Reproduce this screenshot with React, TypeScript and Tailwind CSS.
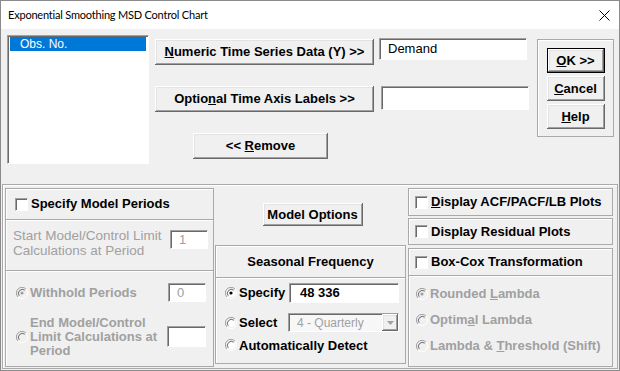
import clsx from "clsx"
import type { ReactNode } from "react"

const raised =
  "bg-[#f0f0f0] shadow-[inset_-1px_-1px_#696969,inset_1px_1px_#ffffff,inset_-2px_-2px_#a0a0a0,inset_2px_2px_#e3e3e3]"
const sunken = "border border-[#a0a0a0] border-r-white border-b-white shadow-[inset_1px_1px_#696969]"
const frame = "border border-[#a9a9a9] shadow-[inset_1px_1px_#ffffff]"

function Btn({ children, className }: { children: ReactNode; className?: string }) {
  return (
    <div className={clsx("flex items-center justify-center text-[13px] font-bold text-black", raised, className)}>
      {children}
    </div>
  )
}

function Check() {
  return <div className={clsx("w-[13px] h-[13px] bg-white shrink-0", sunken)} />
}

function Radio({ checked, disabled }: { checked?: boolean; disabled?: boolean }) {
  return (
    <svg width="12" height="12" viewBox="0 0 12 12" className="shrink-0">
      <path d="M10 2 A5.5 5.5 0 0 0 2 10" fill="none" stroke="#a0a0a0" strokeWidth="1" />
      <path d="M2 10 A5.5 5.5 0 0 0 10 2" fill="none" stroke="#ffffff" strokeWidth="1" />
      <circle cx="6" cy="6" r="4" fill={disabled ? "#f0f0f0" : "#ffffff"} />
      <path d="M8.8 3.2 A4 4 0 0 0 3.2 8.8" fill="none" stroke="#696969" strokeWidth="1" />
      {checked && <circle cx="6" cy="6" r="1.6" fill={disabled ? "#a0a0a0" : "#000000"} />}
    </svg>
  )
}

function Field({ value, className, muted }: { value?: string; className?: string; muted?: boolean }) {
  return (
    <div
      className={clsx(
        "bg-white flex items-center pl-[8px] text-[13px]",
        muted ? "text-[#a0a0a0]" : "text-black",
        sunken,
        className
      )}
    >
      {value}
    </div>
  )
}

export default function App() {
  return (
    <div className="w-[620px] h-[371px] bg-[#f0f0f0] border border-[#8a8a8a] overflow-hidden font-['Liberation_Sans',Arial,sans-serif] text-black">
      {/* Title bar */}
      <div className="h-[28px] bg-white flex items-center justify-between pl-[7px] pr-[9px]">
        <span className="text-[11px] tracking-[-0.2px] font-['Lato',sans-serif] text-black">
          Exponential Smoothing MSD Control Chart
        </span>
        <svg width="11" height="11" viewBox="0 0 11 11">
          <path d="M0.5 0.5 L10.5 10.5 M10.5 0.5 L0.5 10.5" stroke="#000" strokeWidth="1" />
        </svg>
      </div>

      {/* Top section */}
      <div className="flex h-[155px]">
        <div className={clsx("ml-[6px] mt-[6px] w-[142px] h-[129px] bg-white pt-[1px] px-[2px]", sunken)}>
          <div className="h-[14px] bg-[#0078d7] text-white text-[12px] leading-[14px] pl-[10px]">Obs. No.</div>
        </div>

        <div className="ml-[6px] mt-[10px] flex flex-col">
          <div className="flex items-start">
            <Btn className="w-[219px] h-[26px]">
              <span>
                <u>N</u>umeric Time Series Data (Y) &gt;&gt;
              </span>
            </Btn>
            <Field value="Demand" className="ml-[5px] w-[148px] h-[22px] -mt-[1px]" />
          </div>
          <div className="flex items-start mt-[21px]">
            <Btn className="w-[219px] h-[26px]">
              <span>
                Optio<u>n</u>al Time Axis Labels &gt;&gt;
              </span>
            </Btn>
            <Field className="ml-[7px] w-[148px] h-[24px]" />
          </div>
          <Btn className="ml-[38px] mt-[21px] w-[135px] h-[26px]">
            <span>
              &lt;&lt; <u>R</u>emove
            </span>
          </Btn>
        </div>

        <div className={clsx("ml-[8px] mt-[10px] w-[77px] h-[98px] flex flex-col items-center pt-[8px] gap-[3px]", frame)}>
          <div className="w-[58px] h-[25px] border border-black">
            <Btn className="w-full h-full">
              <span>
                <u>O</u>K &gt;&gt;
              </span>
            </Btn>
          </div>
          <Btn className="w-[58px] h-[25px]">
            <span>
              <u>C</u>ancel
            </span>
          </Btn>
          <Btn className="w-[58px] h-[25px]">
            <span>
              <u>H</u>elp
            </span>
          </Btn>
        </div>
      </div>

      {/* Bottom frame */}
      <div className={clsx("ml-[1px] w-[616px] h-[185px] flex pt-[3px] pl-[2px]", frame)}>
        {/* Left panel */}
        <div className={clsx("w-[209px] h-[179px] flex flex-col", frame)}>
          <div className="h-[31px] flex items-center gap-[3px] pl-[9px] border-b border-[#a9a9a9]">
            <Check />
            <span className="text-[13px] font-bold">Specify Model Periods</span>
          </div>
          <div className="h-[51px] flex items-start justify-between pl-[7px] pr-[5px] pt-[8px] border-b border-[#a9a9a9] shadow-[inset_0_1px_#ffffff]">
            <span className="text-[13.5px] leading-[15px] text-[#a0a0a0]">
              Start Model/Control Limit
              <br />
              Calculations at Period
            </span>
            <Field value="1" muted className="w-[38px] h-[19px] mt-[2px]" />
          </div>
          <div className="flex-1 flex flex-col pl-[10px] pr-[7px] shadow-[inset_0_1px_#ffffff]">
            <div className="flex items-center mt-[12px]">
              <Radio checked disabled />
              <span className="ml-[2px] text-[13px] font-bold text-[#a0a0a0]">Withhold Periods</span>
              <Field value="0" muted className="ml-auto w-[38px] h-[19px]" />
            </div>
            <div className="flex items-center mt-[13px]">
              <Radio disabled />
              <span className="ml-[2px] text-[13px] font-bold leading-[14px] text-[#a0a0a0]">
                End Model/Control
                <br />
                Limit Calculations at
                <br />
                Period
              </span>
              <Field className="ml-auto w-[39px] h-[21px]" />
            </div>
          </div>
        </div>

        {/* Middle column */}
        <div className="w-[191px] ml-[1px] flex flex-col">
          <div className="h-[57px] flex justify-center pt-[15px] pl-[4px]">
            <Btn className="w-[100px] h-[23px]">Model Options</Btn>
          </div>
          <div className={clsx("h-[119px] flex flex-col", frame)}>
            <div className="h-[32px] flex items-center justify-center text-[13px] font-bold border-b border-[#a9a9a9]">
              Seasonal Frequency
            </div>
            <div className="flex flex-col pl-[9px] pr-[6px] pt-[5px] shadow-[inset_0_1px_#ffffff]">
              <div className="flex items-center">
                <Radio checked />
                <span className="ml-[2px] text-[13px] font-bold">Specify</span>
                <div className="ml-auto w-[110px] h-[20px] bg-white flex items-center pl-[10px] text-[13px] font-bold border border-[#a0a0a0] border-r-white border-b-white shadow-[inset_1px_1px_#696969]">
                  48 336
                </div>
              </div>
              <div className="flex items-center mt-[10px]">
                <Radio />
                <span className="ml-[2px] text-[13px] font-bold">Select</span>
                <div className={clsx("ml-auto w-[111px] h-[19px] bg-[#f7f7f7] flex items-center", sunken)}>
                  <span className="pl-[8px] text-[12px] text-[#a0a0a0] flex-1">4 - Quarterly</span>
                  <div className={clsx("w-[16px] h-full flex items-center justify-center", raised)}>
                    <svg width="7" height="4" viewBox="0 0 7 4">
                      <path d="M0 0 H7 L3.5 4 Z" fill="#a0a0a0" />
                    </svg>
                  </div>
                </div>
              </div>
              <div className="flex items-center mt-[3px]">
                <Radio />
                <span className="ml-[2px] text-[13px] font-bold">Automatically Detect</span>
              </div>
            </div>
          </div>
        </div>

        {/* Right column */}
        <div className="w-[205px] ml-[2px] flex flex-col">
          <div className={clsx("h-[28px] flex items-center gap-[3px] pl-[6px]", frame)}>
            <Check />
            <span className="text-[13px] font-bold">
              <u>D</u>isplay ACF/PACF/LB Plots
            </span>
          </div>
          <div className={clsx("h-[27px] mt-[2px] flex items-center gap-[3px] pl-[6px]", frame)}>
            <Check />
            <span className="text-[13px] font-bold">Display Residual Plots</span>
          </div>
          <div className={clsx("h-[119px] mt-[3px] flex flex-col", frame)}>
            <div className="h-[27px] shrink-0 flex items-center gap-[3px] pl-[6px] border-b border-[#a9a9a9]">
              <Check />
              <span className="text-[13px] font-bold">Box-Cox Transformation</span>
            </div>
            <div className="flex flex-col gap-[11px] pl-[7px] pt-[10px] shadow-[inset_0_1px_#ffffff] text-[13px] leading-[15px] font-bold text-[#a0a0a0]">
              <div className="flex items-center gap-[2px]">
                <Radio checked disabled />
                <span>
                  Rounded <u>L</u>ambda
                </span>
              </div>
              <div className="flex items-center gap-[2px]">
                <Radio disabled />
                <span>
                  Optim<u>a</u>l Lambda
                </span>
              </div>
              <div className="flex items-center gap-[2px]">
                <Radio disabled />
                <span>
                  Lambda &amp; <u>T</u>hreshold (Shift)
                </span>
              </div>
            </div>
          </div>
        </div>
      </div>
    </div>
  )
}
